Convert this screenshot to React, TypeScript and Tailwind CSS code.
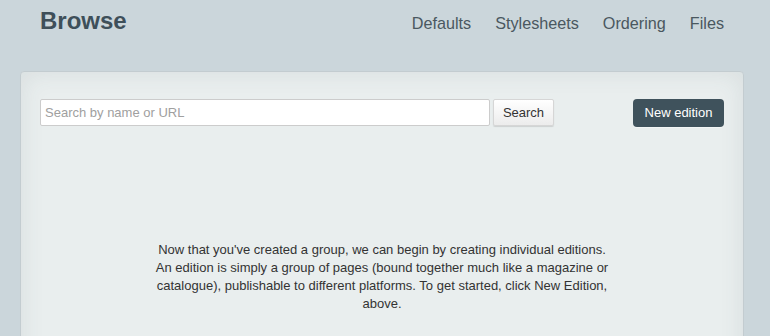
export default function App() {
  const font = { fontFamily: '"Liberation Sans", Arial, sans-serif' };

  return (
    <div className="h-[336px] w-full overflow-hidden bg-[#cbd6db]" style={font}>
      <div className="flex h-[35px] items-baseline justify-between pl-[40px] pr-[46px] pt-[7px]">
        <h1 className="text-[24px] leading-[28px] font-bold text-[#3e4f59]">
          Browse
        </h1>
        <nav className="flex gap-[24px] text-[16.2px] leading-[28px] text-[#4a5860]">
          <a>Defaults</a>
          <a>Stylesheets</a>
          <a>Ordering</a>
          <a>Files</a>
        </nav>
      </div>

      <div className="mt-[36px] ml-[20px] w-[724px] h-[300px] rounded-t-[4px] border border-[#c3ccd0] bg-[#e9eeee] px-[19px] pt-[27px] shadow-[inset_0_0_24px_rgba(60,80,90,0.10)]">
        <div className="flex items-start justify-between">
          <div className="flex gap-[3px]">
            <input
              className="h-[27px] w-[450px] rounded-[2px] border border-[#cccccc] bg-white px-[4px] text-[13px] text-[#333] placeholder:text-[#a0a0a0] outline-none"
              placeholder="Search by name or URL"
            />
            <button className="h-[27px] w-[61px] rounded-[2px] border border-[#d6d6d6] bg-gradient-to-b from-white to-[#ececec] text-[13px] text-[#333] shadow-[0_1px_1px_rgba(0,0,0,0.12)]">
              Search
            </button>
          </div>
          <button className="h-[28px] w-[91px] rounded-[4px] bg-[#3f525c] text-[13px] text-white shadow-[0_1px_0_rgba(255,255,255,0.4)]">
            New edition
          </button>
        </div>

        <p className="mx-auto mt-[114px] w-[466px] text-center text-[13px] leading-[18px] text-[#333]">
          Now that you've created a group, we can begin by creating individual
          editions. An edition is simply a group of pages (bound together much
          like a magazine or catalogue), publishable to different platforms. To
          get started, click New Edition, above.
        </p>
      </div>
    </div>
  );
}
